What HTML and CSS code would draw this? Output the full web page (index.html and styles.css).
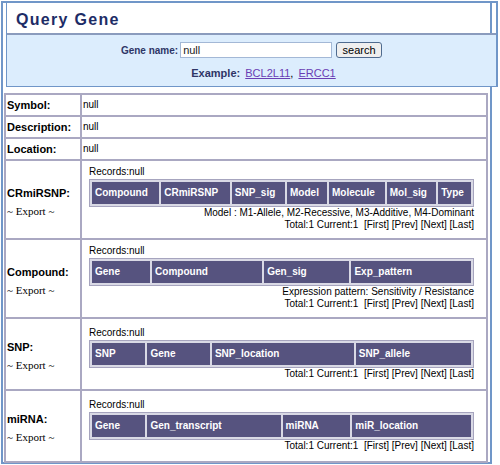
FILE: index.html
```html
<!DOCTYPE html>
<html lang="en">
<head>
    <meta charset="UTF-8">
    <meta name="viewport" content="width=device-width, initial-scale=1.0">
    <title>Query Gene</title>
    <link rel="stylesheet" href="styles.css">
</head>
<body>
    <div class="frame">
        <div class="header-top">
            <h2 class="title">Query Gene</h2>
            <form class="search" action="">
                <div class="search-row">
                    <label class="lbl" for="gene">Gene name:</label>
                    <input type="text" id="gene" name="gene" value="null">
                    <button type="submit" class="button">search</button>
                </div>
                <div class="example">
                    <span class="lbl">Example:</span>
                    <a href="#">BCL2L11</a>, <a href="#">ERCC1</a>
                </div>
            </form>
        </div>

        <table class="info">
            <tr>
                <td class="key">Symbol:</td>
                <td class="val">null</td>
            </tr>
            <tr>
                <td class="key">Description:</td>
                <td class="val">null</td>
            </tr>
            <tr>
                <td class="key">Location:</td>
                <td class="val">null</td>
            </tr>

            <!-- CRmiRSNP -->
            <tr class="section">
                <td class="key">CRmiRSNP:<p class="export">~ Export ~</p></td>
                <td class="val">
                    <p class="records">Records:null</p>
                    <table class="list">
                        <tr>
                            <th>Compound</th>
                            <th>CRmiRSNP</th>
                            <th>SNP_sig</th>
                            <th>Model</th>
                            <th>Molecule</th>
                            <th>Mol_sig</th>
                            <th>Type</th>
                        </tr>
                    </table>
                    <p class="note">Model : M1-Allele, M2-Recessive, M3-Additive, M4-Dominant</p>
                    <p class="note">Total:1 Current:1&nbsp; [First] [Prev] [Next] [Last]</p>
                </td>
            </tr>

            <!-- Compound -->
            <tr class="section">
                <td class="key">Compound:<p class="export">~ Export ~</p></td>
                <td class="val">
                    <p class="records">Records:null</p>
                    <table class="list">
                        <tr>
                            <th>Gene</th>
                            <th>Compound</th>
                            <th>Gen_sig</th>
                            <th>Exp_pattern</th>
                        </tr>
                    </table>
                    <p class="note">Expression pattern: Sensitivity / Resistance</p>
                    <p class="note">Total:1 Current:1&nbsp; [First] [Prev] [Next] [Last]</p>
                </td>
            </tr>

            <!-- SNP -->
            <tr class="section">
                <td class="key">SNP:<p class="export">~ Export ~</p></td>
                <td class="val">
                    <p class="records">Records:null</p>
                    <table class="list">
                        <tr>
                            <th>SNP</th>
                            <th>Gene</th>
                            <th>SNP_location</th>
                            <th>SNP_allele</th>
                        </tr>
                    </table>
                    <p class="note">Total:1 Current:1&nbsp; [First] [Prev] [Next] [Last]</p>
                </td>
            </tr>

            <!-- miRNA -->
            <tr class="section">
                <td class="key">miRNA:<p class="export">~ Export ~</p></td>
                <td class="val">
                    <p class="records">Records:null</p>
                    <table class="list">
                        <tr>
                            <th>Gene</th>
                            <th>Gen_transcript</th>
                            <th>miRNA</th>
                            <th>miR_location</th>
                        </tr>
                    </table>
                    <p class="note">Total:1 Current:1&nbsp; [First] [Prev] [Next] [Last]</p>
                </td>
            </tr>
        </table>
    </div>
</body>
</html>
```

FILE: styles.css
```css
* {
    margin: 0;
    padding: 0;
    box-sizing: border-box;
}
body {
    padding: 1px 0 0 1px;
    background-color: white;
    font-family: 'Liberation Sans', Arial, sans-serif;
    font-size: 10px;
    color: black;
}
.frame {
    width: 491px;
    height: 463px;
    border: 2px solid #7096c8;
}

/* Header */
.header-top {
    margin: -2px -8px 0 3px;
    border: 2px solid #7096c8;
    border-left-width: 1px;
    border-bottom-width: 1px;
}
.title {
    height: 32px;
    padding: 4px 0 0 9px;
    line-height: 26px;
    font-size: 16px;
    font-weight: bold;
    letter-spacing: 1.3px;
    color: #1d2c66;
    border-bottom: 2px solid #8a9bbd;
}
.search {
    height: 51px;
    padding-top: 7px;
    background-color: #dcedfd;
    text-align: center;
}
.search-row {
    display: flex;
    justify-content: center;
    align-items: center;
    height: 16px;
}
.lbl {
    font-weight: bold;
    color: #2e3566;
}
input[name=gene] {
    width: 152px;
    height: 16px;
    margin: 0 4px 0 2px;
    padding: 0 2px;
    border: 1px solid #a3b8d6;
    font-family: 'Liberation Sans', Arial, sans-serif;
    font-size: 11px;
    color: #222;
    outline: none;
}
.button {
    width: 46px;
    height: 16px;
    border: 1px solid #4f6b8f;
    border-radius: 3px;
    background-color: #efefef;
    font-family: 'Liberation Sans', Arial, sans-serif;
    font-size: 11px;
    color: black;
}
.example {
    margin-top: 9px;
    padding-left: 24px;
    line-height: 12px;
    font-size: 11px;
}
.example a {
    color: #6a3db4;
    margin-left: 2px;
}

/* Info table */
.info {
    width: 484px;
    margin: 6px 0 0 1px;
    border: 1px solid #aaa8c2;
    border-spacing: 0;
}
.info td {
    border: 1px solid #aaa8c2;
    vertical-align: middle;
}
.key {
    width: 76px;
    padding: 4px 1px;
    line-height: 12px;
    font-size: 11px;
    font-weight: bold;
}
.val {
    padding: 4px 1px;
    line-height: 12px;
}
.section td {
    height: 72px;
}
.section .key {
    padding-top: 8px;
}
.section .val {
    padding: 5px 12px 7px 7px;
}
.export {
    margin-top: 6px;
    font-family: 'Liberation Serif', 'Times New Roman', serif;
    font-size: 11px;
    font-weight: normal;
}
.records {
    line-height: 12px;
    margin-bottom: 1px;
}
.list {
    width: 100%;
    border: 1px solid #a6a4be;
    border-spacing: 2px;
    background-color: #d9d9e5;
}
.list th {
    height: 22px;
    padding: 0 3px;
    background-color: #56537f;
    color: white;
    font-size: 10px;
    font-weight: bold;
    text-align: left;
}
.note {
    line-height: 12px;
    text-align: right;
}
```
